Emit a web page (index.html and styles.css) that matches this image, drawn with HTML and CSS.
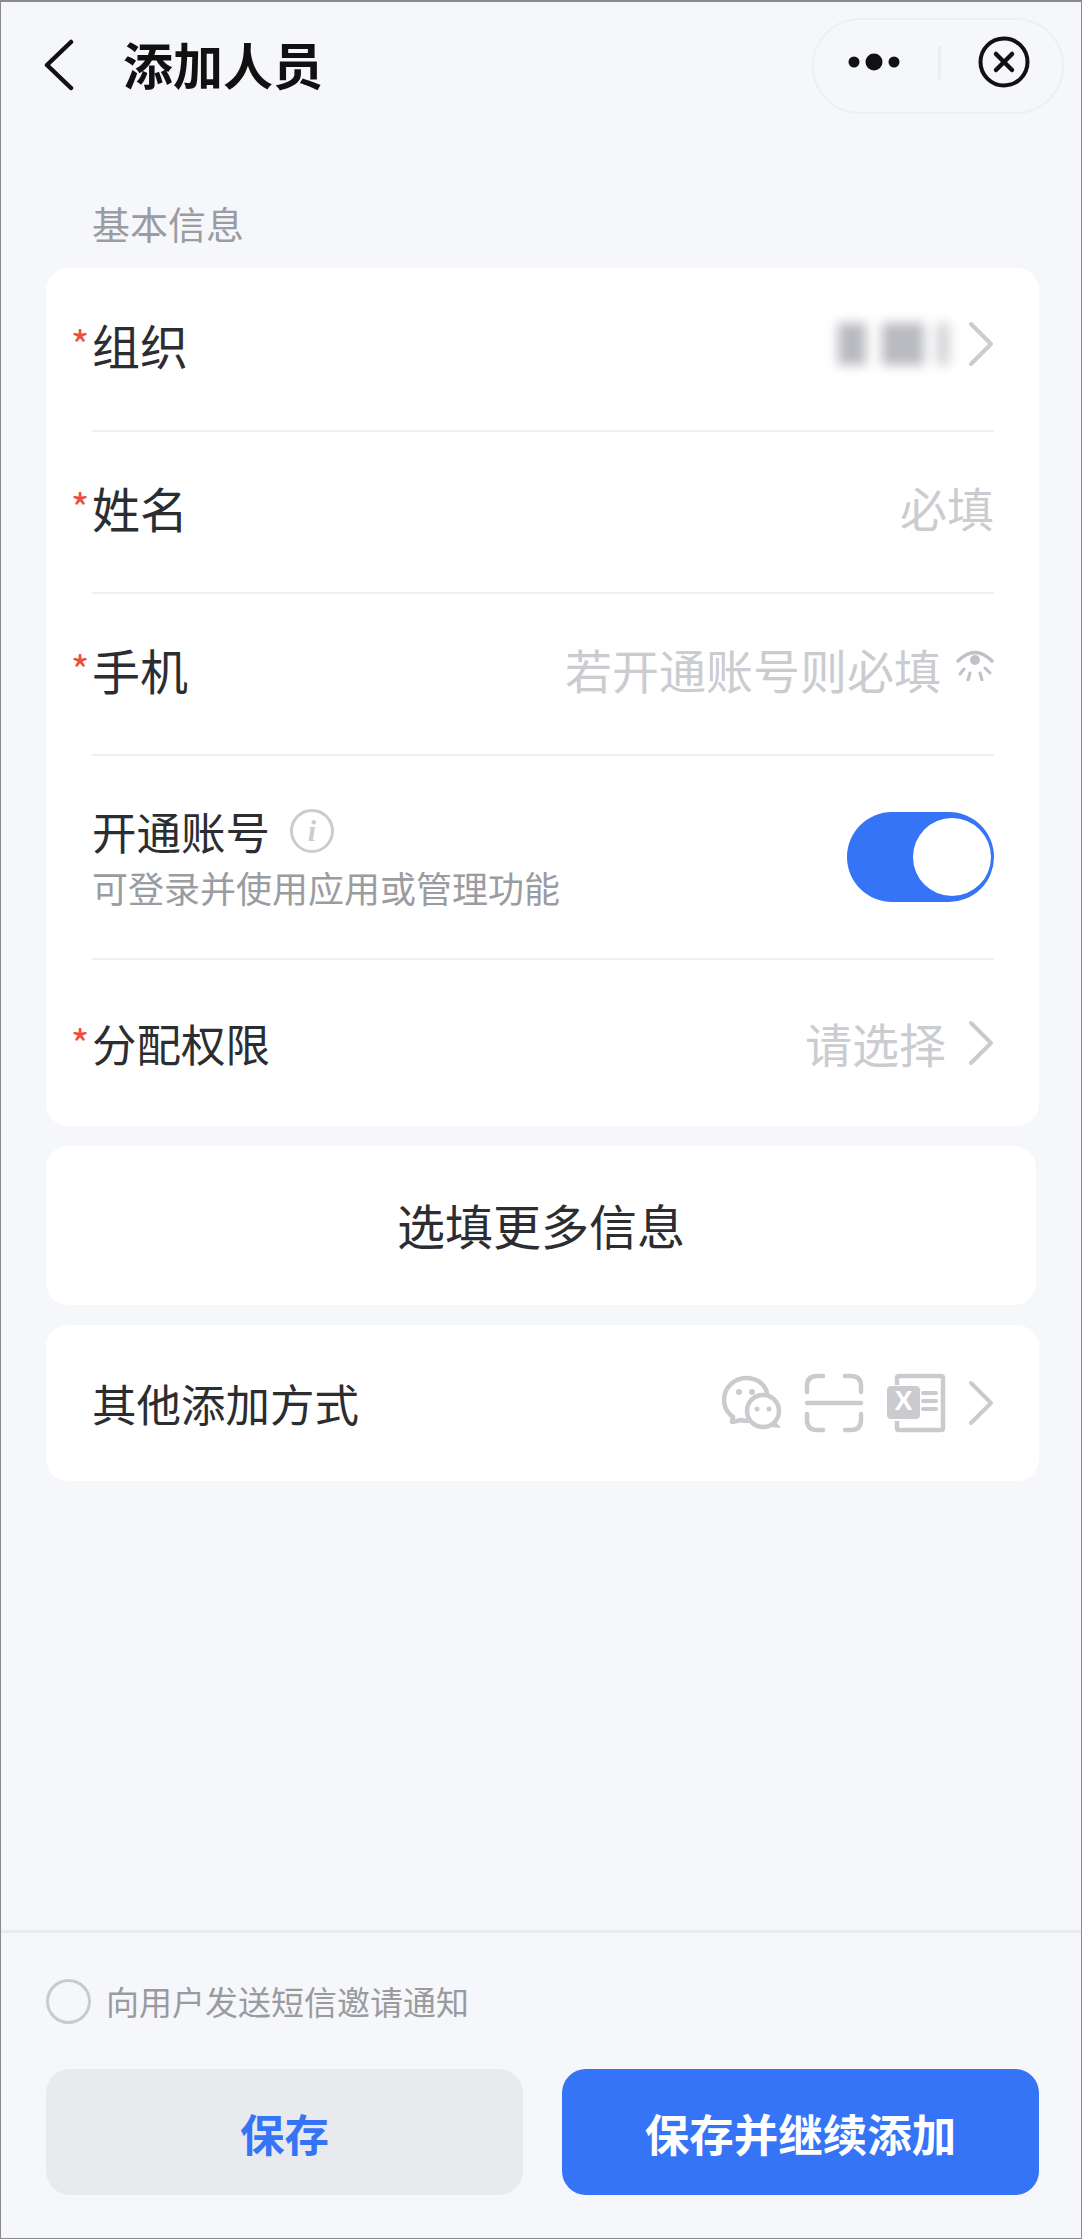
FILE: index.html
```html
<!DOCTYPE html>
<html lang="zh-CN">
<head>
  <title>添加人员</title>
  <meta charset="utf-8"/>
  <link rel="stylesheet" href="styles.css">
</head>
<body>

  <div class="page">

    <div class="header">
      <svg class="back" width="32" height="52" viewBox="0 0 32 52">
        <path d="M28 3 L4 26 L28 49" fill="none" stroke="#111" stroke-width="4.5" stroke-linecap="round" stroke-linejoin="round"/>
      </svg>
      <div class="title">添加人员</div>
      <div class="capsule">
        <svg width="62" height="20" viewBox="0 0 62 20">
          <circle cx="11" cy="10" r="5.5" fill="#111"/>
          <circle cx="31" cy="10" r="8.5" fill="#111"/>
          <circle cx="51" cy="10" r="5.5" fill="#111"/>
        </svg>
        <div class="capsule-line"></div>
        <svg width="52" height="52" viewBox="0 0 52 52">
          <circle cx="26" cy="26" r="23.5" fill="none" stroke="#111" stroke-width="4"/>
          <path d="M18 18 L34 34 M34 18 L18 34" stroke="#111" stroke-width="4.5" stroke-linecap="round"/>
        </svg>
      </div>
    </div>

    <div class="section-title">基本信息</div>

    <div class="card">
      <div class="row row-first">
        <span class="star">*</span>
        <span class="label">组织</span>
        <div class="right">
          <div class="blurred">
            <i class="b1"></i><i class="b2"></i><i class="b3"></i>
          </div>
          <svg class="chevron" width="26" height="46" viewBox="0 0 26 46">
            <path d="M3 3 L23 23 L3 43" fill="none" stroke="#cacbce" stroke-width="4" stroke-linecap="round" stroke-linejoin="round"/>
          </svg>
        </div>
      </div>
      <div class="row">
        <span class="star">*</span>
        <span class="label">姓名</span>
        <div class="right placeholder">必填</div>
      </div>
      <div class="row">
        <span class="star">*</span>
        <span class="label">手机</span>
        <div class="right placeholder">
          若开通账号则必填
          <svg class="eye" width="38" height="34" viewBox="0 0 38 34">
            <path d="M2 14 Q19 -3 36 14" fill="none" stroke="#bfc1c6" stroke-width="3.5" stroke-linecap="round"/>
            <circle cx="19" cy="13" r="5" fill="#bfc1c6"/>
            <path d="M4 27 L8 22 M12 33 L14 26 M26 33 L24 26 M34 26 L29 21" stroke="#bfc1c6" stroke-width="3" stroke-linecap="round"/>
          </svg>
        </div>
      </div>
      <div class="row row-account">
        <div class="account-text">
          <div class="account-title">
            <span>开通账号</span>
            <span class="info">i</span>
          </div>
          <div class="account-sub">可登录并使用应用或管理功能</div>
        </div>
        <div class="switch"><div class="knob"></div></div>
      </div>
      <div class="row row-last">
        <span class="star">*</span>
        <span class="label label-small">分配权限</span>
        <div class="right placeholder">
          请选择
          <svg class="chevron" width="26" height="46" viewBox="0 0 26 46">
            <path d="M3 3 L23 23 L3 43" fill="none" stroke="#cacbce" stroke-width="4" stroke-linecap="round" stroke-linejoin="round"/>
          </svg>
        </div>
      </div>
    </div>

    <div class="card card-more">选填更多信息</div>

    <div class="card card-other">
      <span class="label label-small">其他添加方式</span>
      <div class="other-icons">
        <svg width="60" height="56" viewBox="0 0 60 56">
          <path d="M11 42 C4 37 2 31 2 25 C2 12 13 3 24 3 C35 3 43 9 45 18" fill="none" stroke="#cacbce" stroke-width="4.5" stroke-linecap="round"/>
          <path d="M11 42 L10 47 L19 45 C22 46 24 46 26 46" fill="none" stroke="#cacbce" stroke-width="4.5" stroke-linecap="round" stroke-linejoin="round"/>
          <circle cx="17" cy="17" r="3" fill="#cacbce"/>
          <circle cx="30" cy="17" r="3" fill="#cacbce"/>
          <circle cx="41" cy="36" r="16" fill="none" stroke="#cacbce" stroke-width="4.5"/>
          <path d="M52 47 L57 52 L50 51" fill="#cacbce" stroke="#cacbce" stroke-width="2" stroke-linejoin="round"/>
          <circle cx="35" cy="34" r="2.5" fill="#cacbce"/>
          <circle cx="47" cy="34" r="2.5" fill="#cacbce"/>
        </svg>
        <svg width="60" height="60" viewBox="0 0 60 60">
          <path d="M19 3 H13 Q3 3 3 13 V19 M41 3 H47 Q57 3 57 13 V19 M19 57 H13 Q3 57 3 47 V41 M41 57 H47 Q57 57 57 47 V41" fill="none" stroke="#cacbce" stroke-width="4.5" stroke-linecap="round"/>
          <path d="M3 30 H57" stroke="#cacbce" stroke-width="4.5" stroke-linecap="round"/>
        </svg>
        <svg width="60" height="60" viewBox="0 0 60 60">
          <path d="M11 12 V5 Q11 3 13 3 H55 Q57 3 57 5 V55 Q57 57 55 57 H13 Q11 57 11 55 V48" fill="none" stroke="#cacbce" stroke-width="4.5"/>
          <rect x="1" y="13" width="33" height="33" rx="4" fill="#cacbce"/>
          <text class="excel-x" x="17.5" y="37" text-anchor="middle">X</text>
          <path d="M37 20 H50 M37 28 H50 M37 36 H50" stroke="#cacbce" stroke-width="4" stroke-linecap="round"/>
        </svg>
        <svg class="chevron" width="26" height="46" viewBox="0 0 26 46">
          <path d="M3 3 L23 23 L3 43" fill="none" stroke="#cacbce" stroke-width="4" stroke-linecap="round" stroke-linejoin="round"/>
        </svg>
      </div>
    </div>

    <div class="footer">
      <div class="notify">
        <span class="radio"></span>
        <span>向用户发送短信邀请通知</span>
      </div>
      <div class="buttons">
        <div class="btn btn-save">保存</div>
        <div class="btn btn-continue">保存并继续添加</div>
      </div>
    </div>

  </div>

</body>
</html>
```

FILE: styles.css
```css
* {
  box-sizing: border-box;
}

html, body {
  margin: 0;
  padding: 0;
}

body {
  font-family: "Noto Sans CJK SC", "Noto Sans", sans-serif;
  color: #2b2d31;
}

.page {
  width: 1082px;
  height: 2239px;
  background: #f6f7fb;
  border: 1px solid #8a8a8a;
  border-top-width: 2px;
  display: flex;
  flex-direction: column;
}

/* header */
.header {
  display: flex;
  align-items: center;
  height: 96px;
  margin-top: 16px;
  padding: 0 17px 0 42px;
}

.back {
  margin-top: -2px;
}

.title {
  margin-left: 48px;
  font-size: 50px;
  line-height: 60px;
  font-weight: 700;
  color: #111;
  margin-top: -6px;
}

.capsule {
  margin-left: auto;
  width: 252px;
  height: 96px;
  border: 2px solid #eeeff2;
  border-radius: 48px;
  display: flex;
  align-items: center;
  padding: 0 0 8px 29px;
}

.capsule-line {
  width: 3px;
  height: 33px;
  background: #eceef1;
  margin-left: 33px;
}

.capsule svg:last-child {
  margin-left: 37px;
}

.section-title {
  margin: 84px 0 0 91px;
  font-size: 38px;
  line-height: 50px;
  color: #9a9ca1;
}

/* cards */
.card {
  background: #fff;
  border-radius: 22px;
  margin: 20px 42px 0 45px;
}

.row {
  display: flex;
  align-items: center;
  height: 162px;
  margin: 0 45px 0 46px;
  padding-bottom: 10px;
  border-bottom: 2px solid #eeeff3;
}

.row-first {
  height: 164px;
}

.row-last {
  height: 166px;
  border-bottom: 0;
  padding-bottom: 0;
}

.row-account {
  height: 204px;
  padding-bottom: 0;
  justify-content: space-between;
}

.star {
  width: 24px;
  margin-left: -24px;
  color: #ec4d3f;
  font-size: 40px;
  line-height: 40px;
  text-align: center;
}

.label {
  font-size: 48px;
  line-height: 60px;
}

.label-small {
  font-size: 44.5px;
}

.right {
  margin-left: auto;
  display: flex;
  align-items: center;
}

.placeholder {
  font-size: 47px;
  line-height: 60px;
  color: #cbccd0;
}

.chevron {
  display: block;
}

.placeholder .chevron {
  margin-left: 22px;
}

.eye {
  margin-left: 15px;
  margin-bottom: 10px;
}

.blurred {
  display: flex;
  align-items: center;
  width: 128px;
  height: 72px;
  padding-left: 10px;
  margin-right: 12px;
  filter: blur(6px);
}

.blurred i {
  display: block;
  height: 42px;
  background: #b9babf;
}

.blurred .b1 {
  width: 28px;
}

.blurred .b2 {
  width: 42px;
  margin-left: 16px;
}

.blurred .b3 {
  width: 14px;
  margin-left: 12px;
  background: #d4d5d8;
}

/* account row */
.account-title {
  display: flex;
  align-items: center;
  font-size: 44.5px;
  line-height: 56px;
}

.info {
  width: 44px;
  height: 44px;
  margin-left: 20px;
  border: 3px solid #cbccd0;
  border-radius: 50%;
  display: flex;
  align-items: center;
  justify-content: center;
  font-family: "Liberation Serif", serif;
  font-style: italic;
  font-weight: 700;
  font-size: 30px;
  line-height: 30px;
  color: #cbccd0;
}

.account-sub {
  margin-top: 4px;
  font-size: 36px;
  line-height: 48px;
  color: #9a9ca1;
}

.switch {
  width: 147px;
  height: 90px;
  border-radius: 45px;
  background: #3574f6;
  display: flex;
  align-items: center;
  justify-content: flex-end;
  padding-right: 3px;
}

.knob {
  width: 78px;
  height: 78px;
  border-radius: 50%;
  background: #fff;
}

.card-more {
  height: 159px;
  margin-right: 45px;
  display: flex;
  align-items: center;
  justify-content: center;
  font-size: 48px;
  padding-bottom: 4px;
}

.card-other {
  height: 156px;
  display: flex;
  align-items: center;
  padding: 0 45px 0 46px;
}

.other-icons {
  margin-left: auto;
  display: flex;
  align-items: center;
  gap: 22px;
}

.excel-x {
  font-family: "Liberation Sans", sans-serif;
  font-weight: 700;
  font-size: 27px;
  fill: #fff;
}

/* footer */
.footer {
  margin-top: auto;
  height: 308px;
  border-top: 3px solid #eaebef;
  padding: 44px 42px 0 45px;
}

.notify {
  display: flex;
  align-items: center;
  font-size: 33px;
  line-height: 48px;
  color: #999b9f;
}

.radio {
  width: 45px;
  height: 45px;
  margin-right: 15px;
  border: 3px solid #c9cacd;
  border-radius: 50%;
}

.buttons {
  display: flex;
  justify-content: space-between;
  margin-top: 44px;
}

.btn {
  width: 477px;
  height: 126px;
  border-radius: 24px;
  display: flex;
  align-items: center;
  justify-content: center;
  font-size: 44.5px;
  font-weight: 700;
}

.btn-save {
  background: #e9eaee;
  color: #3574f6;
}

.btn-continue {
  background: #3574f6;
  color: #fff;
}
```
